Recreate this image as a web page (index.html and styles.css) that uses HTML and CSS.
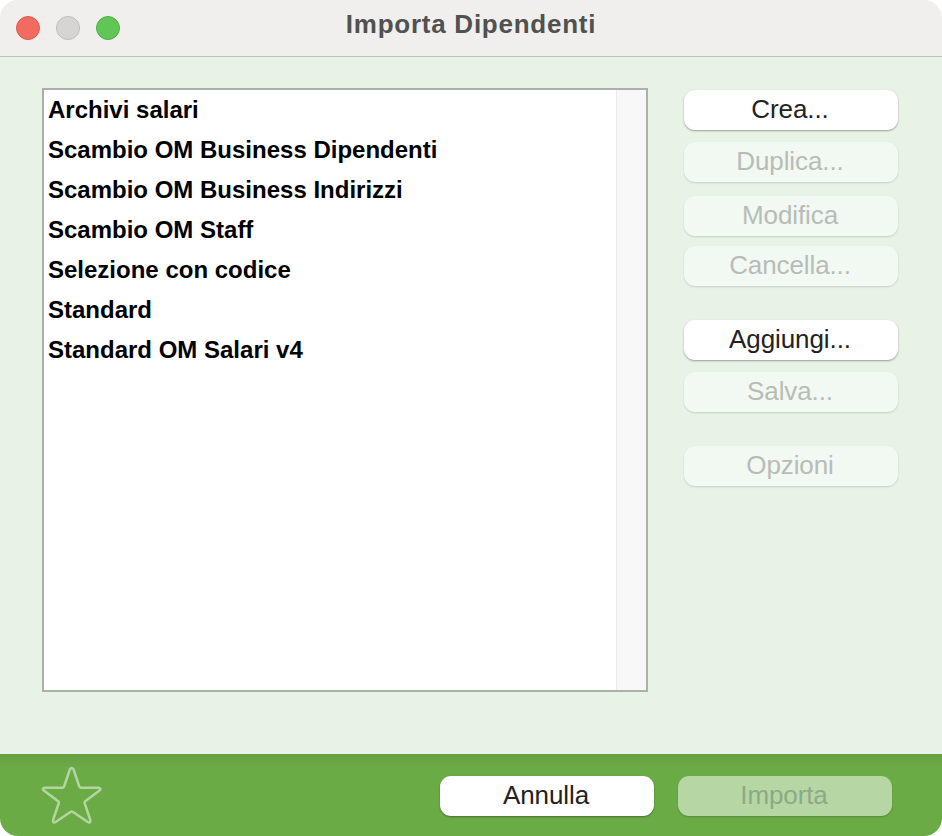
FILE: index.html
```html
<!DOCTYPE html>
<html lang="it">
<head>
<meta charset="utf-8">
<title>Importa Dipendenti</title>
<link rel="stylesheet" href="styles.css">
</head>
<body>
<div class="window">
  <header class="titlebar">
    <div class="lights">
      <span class="light light-close"></span>
      <span class="light light-min"></span>
      <span class="light light-max"></span>
    </div>
    <h1 class="title">Importa Dipendenti</h1>
  </header>
  <main class="content">
    <div class="list">
      <ul class="rows">
        <li class="row">Archivi salari</li>
        <li class="row">Scambio OM Business Dipendenti</li>
        <li class="row">Scambio OM Business Indirizzi</li>
        <li class="row">Scambio OM Staff</li>
        <li class="row">Selezione con codice</li>
        <li class="row">Standard</li>
        <li class="row">Standard OM Salari v4</li>
      </ul>
      <div class="scroll-track"></div>
    </div>
    <div class="actions">
      <button class="btn">Crea...</button>
      <button class="btn btn-off gap-12" disabled>Duplica...</button>
      <button class="btn btn-off gap-14" disabled>Modifica</button>
      <button class="btn btn-off gap-10" disabled>Cancella...</button>
      <button class="btn gap-34">Aggiungi...</button>
      <button class="btn btn-off gap-12" disabled>Salva...</button>
      <button class="btn btn-off gap-34" disabled>Opzioni</button>
    </div>
  </main>
  <footer class="footer">
    <svg class="star" width="62" height="60" viewBox="0 0 62 60" aria-hidden="true">
      <path d="M28.9 3.3 Q30.7 0.6 32.5 3.3 L38.3 20.5 Q38.6 21.7 39.8 21.7 L57.5 21.8 Q61 22.5 58.5 24.6 L44.2 35.3 Q43.3 36 43.6 37 L49.3 54 Q49.8 57.5 46.8 56 L32 46 Q30.7 45 29.4 46 L14.6 56 Q11.6 57.5 12.1 54 L17.8 37 Q18.1 36 17.2 35.3 L2.9 24.6 Q0.4 22.5 3.9 21.8 L21.6 21.7 Q22.8 21.7 23.1 20.5 Z"/>
    </svg>
    <div class="footer-buttons">
      <button class="btn">Annulla</button>
      <button class="btn btn-primary-off" disabled>Importa</button>
    </div>
  </footer>
</div>
</body>
</html>
```
FILE: styles.css
```css
* { box-sizing: border-box; }
html, body { margin: 0; padding: 0; background: #fff; }
.window {
  width: 942px;
  height: 836px;
  display: flex;
  flex-direction: column;
  border-radius: 18px;
  overflow: hidden;
  font-family: "Liberation Sans", Arial, sans-serif;
}
.titlebar {
  height: 57px;
  flex: none;
  display: flex;
  align-items: center;
  justify-content: center;
  position: relative;
  background: #f0efed;
  border-bottom: 1px solid #bcc5ba;
}
.lights {
  position: absolute;
  left: 16px;
  top: 16px;
  display: flex;
  gap: 16px;
}
.light {
  width: 24px;
  height: 24px;
  border-radius: 50%;
  border: 1px solid;
}
.light-close { background: #f26b60; border-color: #dd5a50; }
.light-min { background: #d6d5d3; border-color: #bdbcba; }
.light-max { background: #60c757; border-color: #4fb047; }
.title {
  margin: 0 0 8px;
  font-size: 26px;
  letter-spacing: 0.75px;
  font-weight: 700;
  color: #515150;
}
.content {
  flex: 1;
  display: flex;
  align-items: flex-start;
  padding: 31px 44px 0 42px;
  background: #e8f2e7;
}
.list {
  width: 606px;
  height: 604px;
  display: flex;
  background: #fff;
  border: 2px solid #aab2a8;
}
.rows {
  flex: 1;
  margin: 0;
  padding: 0;
  list-style: none;
}
.row {
  height: 40px;
  padding-left: 4px;
  font-size: 24px;
  line-height: 40px;
  font-weight: 700;
  color: #000;
}
.scroll-track {
  width: 30px;
  background: #f8f8f8;
  border-left: 1px solid #ebebeb;
}
.actions {
  width: 214px;
  margin-left: 36px;
  margin-top: 2px;
  display: flex;
  flex-direction: column;
}
.btn {
  width: 214px;
  height: 40px;
  padding: 0 2px 2px 0;
  border: 0;
  border-radius: 11px;
  background: #fff;
  color: #222;
  font-family: inherit;
  font-size: 26px;
  letter-spacing: -0.1px;
  box-shadow: 0 1px 2px rgba(0, 0, 0, .35);
}
.btn-off {
  background: #f2f8f2;
  color: #b7bdb6;
  box-shadow: 0 1px 2px rgba(0, 0, 0, .15);
}
.gap-10 { margin-top: 10px; }
.gap-12 { margin-top: 12px; }
.gap-14 { margin-top: 14px; }
.gap-34 { margin-top: 34px; }
.footer {
  height: 82px;
  flex: none;
  display: flex;
  align-items: flex-start;
  justify-content: space-between;
  padding: 22px 50px 0 41px;
  background: linear-gradient(#669f41, #6bab46 14px);
}
.star {
  margin-top: -10px;
  fill: none;
  stroke: #b3d6a0;
  stroke-width: 2.5;
  stroke-linejoin: round;
}
.footer-buttons {
  display: flex;
  gap: 24px;
}
.btn-primary-off {
  background: #b6d6a4;
  color: #8ea987;
  box-shadow: 0 1px 2px rgba(0, 0, 0, .2);
}
```
